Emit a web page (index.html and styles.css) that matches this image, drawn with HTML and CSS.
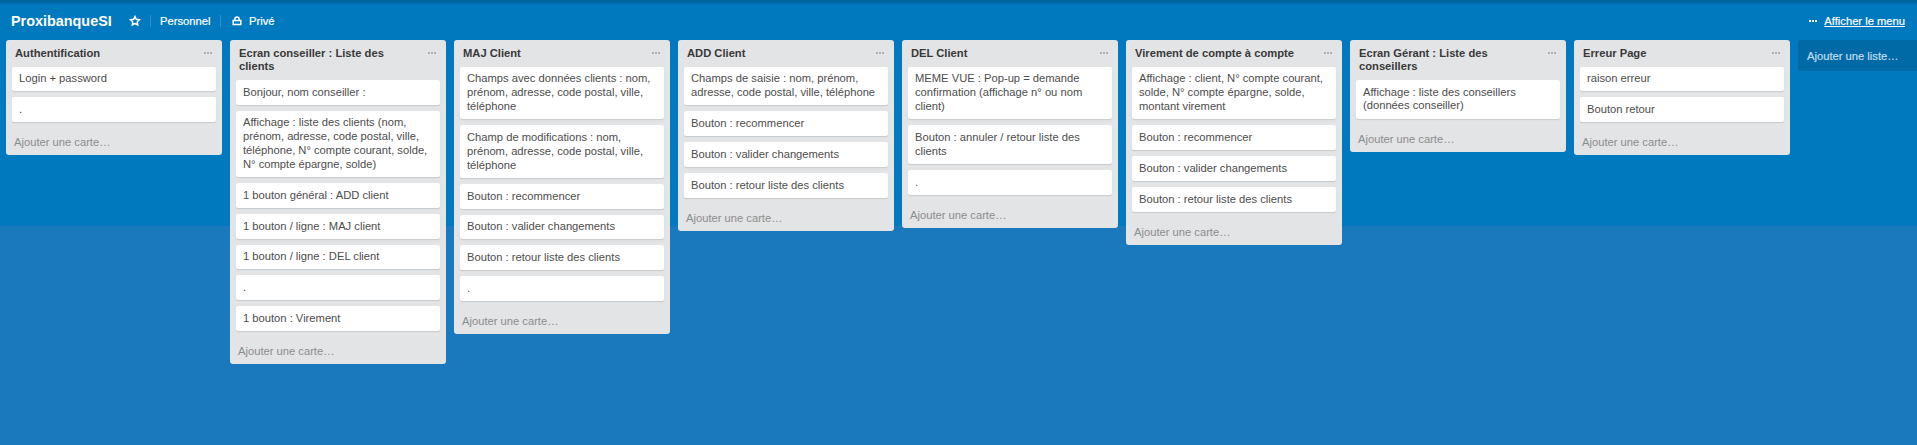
FILE: index.html
```
<!DOCTYPE html>
<html lang="fr">
<head>
<meta charset="utf-8">
<title>ProxibanqueSI</title>
<link rel="stylesheet" href="styles.css">
</head>
<body>
<header class="board-header">
  <h1 class="board-name">ProxibanqueSI</h1>
  <svg class="star" viewBox="0 0 12 12"><path d="M6 1.6 7.3 4.3 10.4 4.7 8.2 6.9 8.7 10 6 8.6 3.3 10 3.8 6.9 1.6 4.7 4.7 4.3Z"/></svg>
  <span class="divider"></span>
  <span class="org">Personnel</span>
  <span class="divider"></span>
  <svg class="lock" viewBox="0 0 10 10"><path d="M1.2 4.6h7.6v4H1.2zM2.9 4.4V3.2a2.1 2.1 0 0 1 4.2 0v1.2"/></svg>
  <span class="visibility">Privé</span>
  <span class="menu"><span class="dots"><i></i><i></i><i></i></span><a class="menu-link">Afficher le menu</a></span>
</header>
<main class="board">
  <section class="list">
    <div class="list-header"><h2>Authentification</h2><span class="dots"><i></i><i></i><i></i></span></div>
    <div class="card">Login + password</div>
    <div class="card">.</div>
    <div class="add-card">Ajouter une carte…</div>
  </section>
  <section class="list">
    <div class="list-header two-line"><h2>Ecran conseiller : Liste des<br>clients</h2><span class="dots"><i></i><i></i><i></i></span></div>
    <div class="card">Bonjour, nom conseiller :</div>
    <div class="card">Affichage : liste des clients (nom,<br>prénom, adresse, code postal, ville,<br>téléphone, N° compte courant, solde,<br>N° compte épargne, solde)</div>
    <div class="card">1 bouton général : ADD client</div>
    <div class="card">1 bouton / ligne : MAJ client</div>
    <div class="card">1 bouton / ligne : DEL client</div>
    <div class="card">.</div>
    <div class="card">1 bouton : Virement</div>
    <div class="add-card">Ajouter une carte…</div>
  </section>
  <section class="list">
    <div class="list-header"><h2>MAJ Client</h2><span class="dots"><i></i><i></i><i></i></span></div>
    <div class="card">Champs avec données clients : nom,<br>prénom, adresse, code postal, ville,<br>téléphone</div>
    <div class="card">Champ de modifications : nom,<br>prénom, adresse, code postal, ville,<br>téléphone</div>
    <div class="card">Bouton : recommencer</div>
    <div class="card">Bouton : valider changements</div>
    <div class="card">Bouton : retour liste des clients</div>
    <div class="card">.</div>
    <div class="add-card">Ajouter une carte…</div>
  </section>
  <section class="list">
    <div class="list-header"><h2>ADD Client</h2><span class="dots"><i></i><i></i><i></i></span></div>
    <div class="card">Champs de saisie : nom, prénom,<br>adresse, code postal, ville, téléphone</div>
    <div class="card">Bouton : recommencer</div>
    <div class="card">Bouton : valider changements</div>
    <div class="card">Bouton : retour liste des clients</div>
    <div class="add-card">Ajouter une carte…</div>
  </section>
  <section class="list">
    <div class="list-header"><h2>DEL Client</h2><span class="dots"><i></i><i></i><i></i></span></div>
    <div class="card">MEME VUE : Pop-up = demande<br>confirmation (affichage n° ou nom<br>client)</div>
    <div class="card">Bouton : annuler / retour liste des<br>clients</div>
    <div class="card">.</div>
    <div class="add-card">Ajouter une carte…</div>
  </section>
  <section class="list">
    <div class="list-header"><h2>Virement de compte à compte</h2><span class="dots"><i></i><i></i><i></i></span></div>
    <div class="card">Affichage : client, N° compte courant,<br>solde, N° compte épargne, solde,<br>montant virement</div>
    <div class="card">Bouton : recommencer</div>
    <div class="card">Bouton : valider changements</div>
    <div class="card">Bouton : retour liste des clients</div>
    <div class="add-card">Ajouter une carte…</div>
  </section>
  <section class="list">
    <div class="list-header two-line"><h2>Ecran Gérant : Liste des<br>conseillers</h2><span class="dots"><i></i><i></i><i></i></span></div>
    <div class="card">Affichage : liste des conseillers<br>(données conseiller)</div>
    <div class="add-card">Ajouter une carte…</div>
  </section>
  <section class="list">
    <div class="list-header"><h2>Erreur Page</h2><span class="dots"><i></i><i></i><i></i></span></div>
    <div class="card">raison erreur</div>
    <div class="card">Bouton retour</div>
    <div class="add-card">Ajouter une carte…</div>
  </section>
  <div class="add-list">Ajouter une liste…</div>
</main>
</body>
</html>
```
FILE: styles.css
```
* { box-sizing: border-box; }
body {
  margin: 0;
  height: 445px;
  overflow: hidden;
  font-family: "Liberation Sans", Arial, sans-serif;
  font-size: 11.2px;
  color: #4d4d4d;
  background: linear-gradient(#00639a 0, #006aa7 3px, #0079bf 5px, #0079bf 226px, #1a78bd 226px);
}
.board-header {
  display: flex;
  align-items: center;
  height: 40px;
  padding: 2px 12px 0 11px;
  color: #fff;
}
.board-name { margin: 0; width: 118px; font-size: 14.4px; line-height: 18px; }
.star { width: 12px; height: 12px; fill: none; stroke: #fff; stroke-width: 1.5; }
.divider { width: 1px; height: 12px; margin: 0 9px; background: #2b8fcb; }
.org { width: 51px; }
.lock { width: 10px; height: 10px; margin: 0 7px 0 2px; fill: none; stroke: #fff; stroke-width: 1.5; }
.org, .visibility, .menu-link, .add-list { -webkit-text-stroke: 0.2px currentColor; }
.menu { display: flex; align-items: center; gap: 7px; margin-left: auto; }
.menu-link { text-decoration: underline; }
.dots { display: flex; gap: 1px; }
.dots i { width: 2px; height: 2px; background: currentColor; }
.board { display: flex; align-items: flex-start; gap: 8px; padding-left: 6px; }
.list {
  flex: none;
  width: 216px;
  padding: 0 6px;
  background: #e2e4e6;
  border-radius: 3px;
}
.list-header {
  display: flex;
  justify-content: space-between;
  height: 26.72px;
  padding: 7px 4px 0 3px;
}
.two-line { height: 39.86px; }
.list-header h2 { margin: 0; font-size: 11.2px; line-height: 13px; color: #393939; white-space: nowrap; }
.list-header .dots { margin-top: 5px; color: #b0b1b3; }
.card {
  margin-bottom: 6px;
  padding: 5.7px 7px 5.16px;
  line-height: 13.92px;
  white-space: nowrap;
  background: #fff;
  border-radius: 2px;
  box-shadow: 0 1px 1px #c8cacc;
}
.add-card { height: 27.2px; padding: 7px 2px 0; line-height: 14px; color: #8c8c8c; }
.add-list {
  flex: 1;
  height: 31px;
  padding: 9px 9px 0;
  line-height: 14px;
  color: #c2dded;
  background: #006aa7;
  border-radius: 3px 0 0 3px;
  white-space: nowrap;
}
```
